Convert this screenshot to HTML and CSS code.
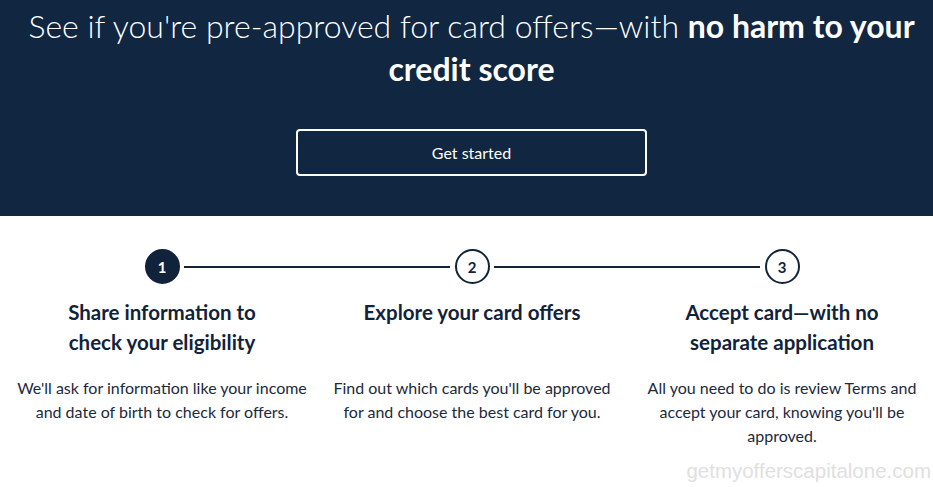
FILE: index.html
```html
<!DOCTYPE html>
<html lang="en">
<head>
    <meta charset="UTF-8">
    <title>Pre-approved card offers</title>
    <link rel="stylesheet" href="styles.css">
</head>
<body>
    <section class="hero">
        <h1>See if you're pre-approved for card offers—with <strong>no harm to your</strong> <strong>credit score</strong></h1>
        <button class="start-btn">Get started</button>
    </section>

    <section class="steps">
        <div class="step">
            <div class="marker">
                <span class="num active">1</span>
                <span class="line"></span>
            </div>
            <h3>Share information to check your eligibility</h3>
            <p>We'll ask for information like your income and date of birth to check for offers.</p>
        </div>
        <div class="step">
            <div class="marker">
                <span class="num">2</span>
                <span class="line"></span>
            </div>
            <h3>Explore your card offers</h3>
            <p>Find out which cards you'll be approved for and choose the best card for you.</p>
        </div>
        <div class="step">
            <div class="marker">
                <span class="num">3</span>
            </div>
            <h3>Accept card—with no separate application</h3>
            <p>All you need to do is review Terms and accept your card, knowing you'll be approved.</p>
        </div>
    </section>

    <div class="watermark">getmyofferscapitalone.com</div>
</body>
</html>
```

FILE: styles.css
```css
body {
    margin: 0;
    font-family: Lato, "Noto Sans", sans-serif;
    color: #11233b;
    background: #fff;
    overflow: hidden;
}
.hero {
    background-color: #112641;
    height: 216px;
    box-sizing: border-box;
    padding: 4px 0 0 10px;
    text-align: center;
    color: #fff;
}
.hero h1 {
    margin: 0;
    padding: 0 10px;
    font-size: 32px;
    font-weight: 300;
    line-height: 43px;
}
.hero h1 strong {
    font-weight: 700;
}
.start-btn {
    margin-top: 39px;
    width: 351px;
    height: 47px;
    background: transparent;
    border: 2px solid #fff;
    border-radius: 4px;
    color: #fff;
    font-family: inherit;
    font-size: 16px;
    cursor: pointer;
}
.steps {
    display: grid;
    grid-template-columns: repeat(3, 310px);
    padding: 33px 0 0 7px;
}
.step {
    display: flex;
    flex-direction: column;
    align-items: center;
    text-align: center;
}
.marker {
    position: relative;
    width: 100%;
    display: flex;
    justify-content: center;
}
.num {
    width: 31px;
    height: 31px;
    border: 2px solid #11233b;
    border-radius: 50%;
    display: flex;
    align-items: center;
    justify-content: center;
    font-size: 15px;
    font-weight: 700;
    color: #11233b;
}
.num.active {
    background: #11233b;
    color: #fff;
}
.line {
    position: absolute;
    top: 17px;
    left: calc(50% + 22px);
    width: calc(100% - 44px);
    height: 2px;
    background: #11233b;
}
.step h3 {
    margin: 13px 0 0;
    max-width: 230px;
    min-height: 60px;
    font-size: 20.5px;
    line-height: 30px;
    font-weight: 700;
}
.step p {
    margin: 19px 0 0;
    padding: 0 6px;
    font-size: 16px;
    line-height: 24px;
    color: #1b2a3d;
}
.watermark {
    position: absolute;
    right: 2px;
    top: 459px;
    font-family: "Liberation Sans", sans-serif;
    font-size: 20.5px;
    color: #e0e0e0;
}
```
